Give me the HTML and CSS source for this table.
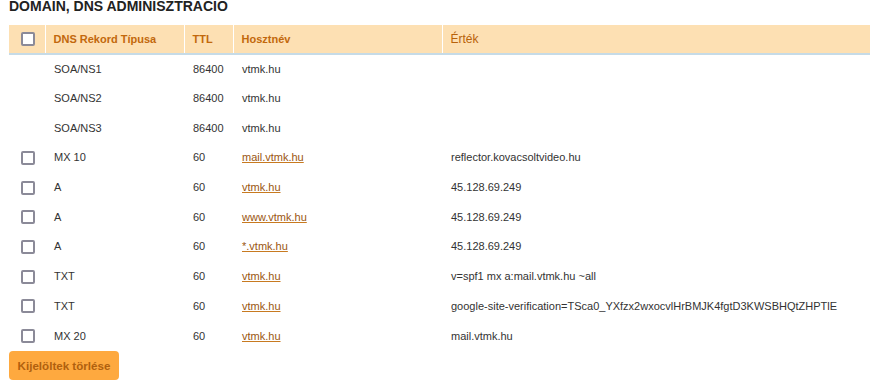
FILE: index.html
```html
<!DOCTYPE html>
<html lang="hu">
<head>
<meta charset="utf-8">
<title>Domain, DNS adminisztracio</title>
<link rel="stylesheet" href="styles.css">
</head>
<body>
<div class="page">
  <h2 class="title">DOMAIN, DNS ADMINISZTRACIO</h2>
  <table class="dns">
    <colgroup>
      <col class="c-check"><col class="c-type"><col class="c-ttl"><col class="c-host"><col class="c-val">
    </colgroup>
    <thead>
      <tr>
        <th class="chk"><span class="box"></span></th>
        <th>DNS Rekord Típusa</th>
        <th>TTL</th>
        <th>Hosztnév</th>
        <th class="light">Érték</th>
      </tr>
    </thead>
    <tbody>
      <tr><td class="chk"></td><td>SOA/NS1</td><td>86400</td><td>vtmk.hu</td><td></td></tr>
      <tr><td class="chk"></td><td>SOA/NS2</td><td>86400</td><td>vtmk.hu</td><td></td></tr>
      <tr><td class="chk"></td><td>SOA/NS3</td><td>86400</td><td>vtmk.hu</td><td></td></tr>
      <tr><td class="chk"><span class="box"></span></td><td>MX 10</td><td>60</td><td><a href="#">mail.vtmk.hu</a></td><td>reflector.kovacsoltvideo.hu</td></tr>
      <tr><td class="chk"><span class="box"></span></td><td>A</td><td>60</td><td><a href="#">vtmk.hu</a></td><td>45.128.69.249</td></tr>
      <tr><td class="chk"><span class="box"></span></td><td>A</td><td>60</td><td><a href="#">www.vtmk.hu</a></td><td>45.128.69.249</td></tr>
      <tr><td class="chk"><span class="box"></span></td><td>A</td><td>60</td><td><a href="#">*.vtmk.hu</a></td><td>45.128.69.249</td></tr>
      <tr><td class="chk"><span class="box"></span></td><td>TXT</td><td>60</td><td><a href="#">vtmk.hu</a></td><td>v=spf1 mx a:mail.vtmk.hu ~all</td></tr>
      <tr><td class="chk"><span class="box"></span></td><td>TXT</td><td>60</td><td><a href="#">vtmk.hu</a></td><td>google-site-verification=TSca0_YXfzx2wxocvlHrBMJK4fgtD3KWSBHQtZHPTlE</td></tr>
      <tr><td class="chk"><span class="box"></span></td><td>MX 20</td><td>60</td><td><a href="#">vtmk.hu</a></td><td>mail.vtmk.hu</td></tr>
    </tbody>
  </table>
  <button class="btn" type="button">Kijelöltek törlése</button>
</div>
</body>
</html>
```

FILE: styles.css
```css
html, body {
  margin: 0;
  padding: 0;
  background: #ffffff;
}

body {
  font-family: "Liberation Sans", Arial, sans-serif;
  font-size: 11px;
  color: #333333;
}

.page {
  padding-left: 9px;
}

.title {
  margin: 0 0 12px 0;
  font-size: 14px;
  line-height: 13px;
  font-weight: bold;
  color: #222222;
}

.dns {
  width: 861px;
  border-collapse: collapse;
  table-layout: fixed;
}

.c-check { width: 36px; }
.c-type { width: 139px; }
.c-ttl { width: 49px; }
.c-host { width: 209px; }
.c-val { width: auto; }

.dns thead tr {
  height: 29px;
  background: #fde0b3;
  border-bottom: 2px solid #c6dbe7;
}

.dns th {
  padding: 0 0 0 8px;
  text-align: left;
  font-weight: bold;
  font-size: 11px;
  color: #c2680c;
  border-left: 1px solid #ffffff;
  vertical-align: middle;
}

.dns th.light {
  font-weight: normal;
  color: #b8620a;
  font-size: 12px;
}

.dns th.chk {
  border-left: none;
}

.dns tbody tr {
  height: 29.7px;
}

.dns td {
  padding: 0 0 0 9px;
  vertical-align: middle;
  white-space: nowrap;
  line-height: 13px;
}

.dns .chk {
  padding: 0 0 0 12px;
  line-height: 0;
}

.box {
  display: inline-block;
  width: 10px;
  height: 10px;
  border: 2px solid #8b8a98;
  border-radius: 2px;
  background: #ffffff;
}

.dns a {
  color: #9a5610;
  text-decoration: underline;
  text-decoration-color: #c87a20;
}

.btn {
  display: block;
  margin-top: 0;
  width: 110px;
  height: 29px;
  padding: 0;
  border: none;
  border-radius: 4px;
  background: #fea93f;
  color: #b0600e;
  font-family: "Liberation Sans", Arial, sans-serif;
  font-size: 11.6px;
  font-weight: bold;
  cursor: pointer;
}
```
